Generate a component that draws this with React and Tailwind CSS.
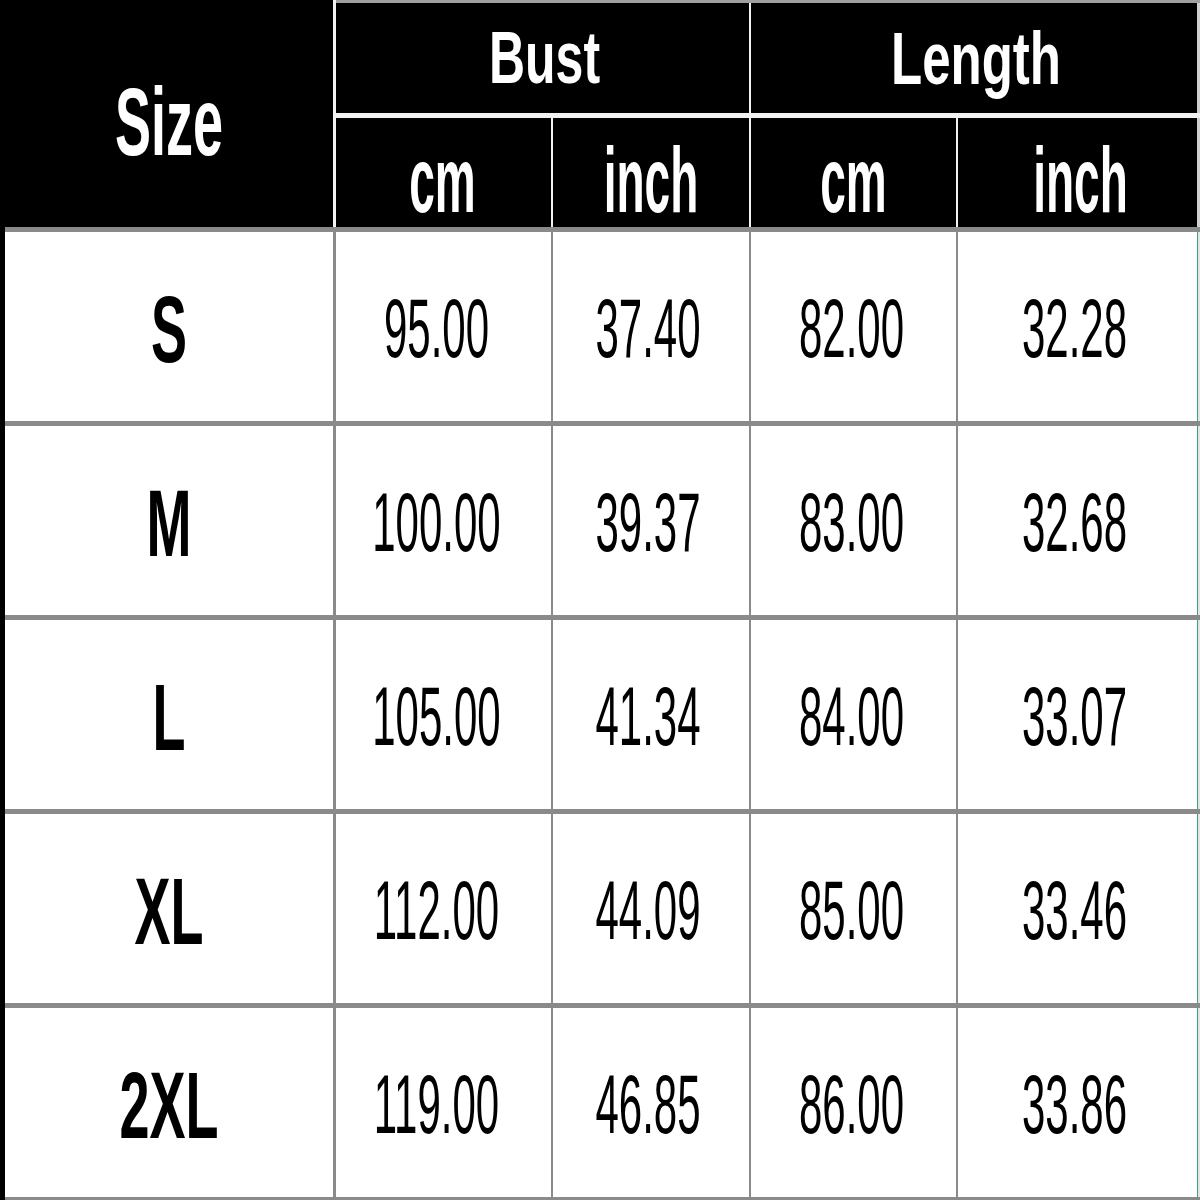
import React from "react";

const rows = [
  ["S", "95.00", "37.40", "82.00", "32.28"],
  ["M", "100.00", "39.37", "83.00", "32.68"],
  ["L", "105.00", "41.34", "84.00", "33.07"],
  ["XL", "112.00", "44.09", "85.00", "33.46"],
  ["2XL", "119.00", "46.85", "86.00", "33.86"],
];

function Value({ children }) {
  return (
    <span className="inline-block leading-none text-[42px] text-black scale-y-[2] font-['Liberation_Sans',Arial,sans-serif]">
      {children}
    </span>
  );
}

function Row({ data }) {
  const [size, bustCm, bustIn, lenCm, lenIn] = data;
  return (
    <div className="flex h-[189px] bg-white">
      <div className="w-[328px] flex items-center justify-center pt-[4px]">
        <span className="inline-block leading-none text-[54px] font-bold text-black scale-y-[1.75] font-['Liberation_Sans',Arial,sans-serif]">
          {size}
        </span>
      </div>
      <div className="w-[3px] bg-[#8a8a8a]" />
      <div className="w-[215px] flex items-center justify-center pt-[4px] pr-[14px]">
        <Value>{bustCm}</Value>
      </div>
      <div className="w-[2px] bg-[#8a8a8a]" />
      <div className="w-[196px] flex items-center justify-center pt-[4px] pr-[6px]">
        <Value>{bustIn}</Value>
      </div>
      <div className="w-[2px] bg-[#8a8a8a]" />
      <div className="w-[205px] flex items-center justify-center pt-[4px] pr-[4px]">
        <Value>{lenCm}</Value>
      </div>
      <div className="w-[2px] bg-[#8a8a8a]" />
      <div className="w-[239px] flex items-center justify-center pt-[4px] pr-[6px]">
        <Value>{lenIn}</Value>
      </div>
      <div className="w-[3px] border-l border-[#3aa37a] bg-[#e5e5e5]" />
    </div>
  );
}

export default function App() {
  const head = "inline-block leading-none font-bold text-white font-['Liberation_Sans',Arial,sans-serif]";
  return (
    <div className="w-[1200px] h-[1200px] bg-white border-l-[5px] border-black flex flex-col overflow-hidden">
      {/* header */}
      <div className="flex h-[227px]">
        <div className="w-[328px] bg-black flex items-center justify-center pt-[14px]">
          <span className={head + " text-[54px] scale-y-[1.8]"}>Size</span>
        </div>
        <div className="w-[3px] bg-[#f2f2f2]" />
        <div className="flex-1 flex flex-col">
          <div className="h-[3px] bg-[#a0a0a0]" />
          <div className="flex h-[110px]">
            <div className="w-[413px] bg-black flex items-center justify-center pl-[4px]">
              <span className={head + " text-[50px] scale-y-[1.47]"}>Bust</span>
            </div>
            <div className="w-[2px] bg-[#f2f2f2]" />
            <div className="w-[446px] bg-black flex items-center justify-center pl-[4px]">
              <span className={head + " text-[51px] scale-y-[1.47]"}>Length</span>
            </div>
            <div className="w-[3px] bg-[#d0d0d0]" />
          </div>
          <div className="h-[5px] bg-[#f2f2f2]" />
          <div className="flex h-[109px]">
            <div className="w-[215px] bg-black flex items-center justify-center pt-[14px] pr-[2px]">
              <span className={head + " text-[46px] scale-y-[2]"}>cm</span>
            </div>
            <div className="w-[2px] bg-[#f2f2f2]" />
            <div className="w-[196px] bg-black flex items-center justify-center pt-[14px]">
              <span className={head + " text-[46px] scale-y-[2]"}>inch</span>
            </div>
            <div className="w-[2px] bg-[#f2f2f2]" />
            <div className="w-[205px] bg-black flex items-center justify-center pt-[14px]">
              <span className={head + " text-[46px] scale-y-[2]"}>cm</span>
            </div>
            <div className="w-[2px] bg-[#f2f2f2]" />
            <div className="w-[239px] bg-black flex items-center justify-center pt-[14px] pl-[6px]">
              <span className={head + " text-[46px] scale-y-[2]"}>inch</span>
            </div>
            <div className="w-[3px] bg-[#d0d0d0]" />
          </div>
        </div>
      </div>
      <div className="h-[5px] bg-[#8a8a8a]" />

      {/* body */}
      {rows.map((r, i) => (
        <React.Fragment key={r[0]}>
          {i > 0 && <div className="h-[5px] bg-[#8a8a8a]" />}
          <Row data={r} />
        </React.Fragment>
      ))}
      <div className="h-[3px] bg-[#8a8a8a]" />
    </div>
  );
}
